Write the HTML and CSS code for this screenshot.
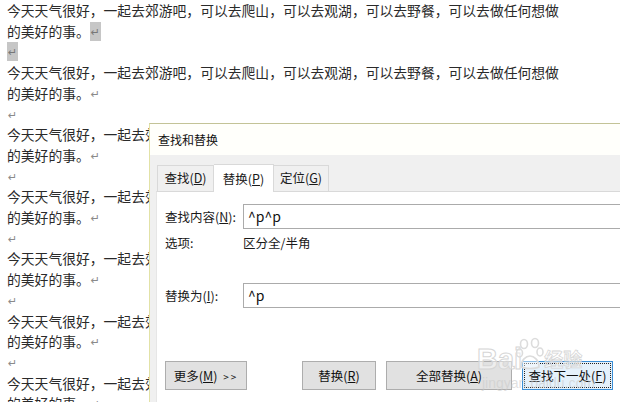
FILE: index.html
```html
<!DOCTYPE html>
<html lang="zh-CN">
<head>
<meta charset="utf-8">
<link rel="stylesheet" href="styles.css">
</head>
<body>
<div class="doc">
  <p class="para">今天天气很好，一起去郊游吧，可以去爬山，可以去观湖，可以去野餐，可以去做任何想做<br>的美好的事。<span class="mark sel">↵</span></p>
  <p class="para"><span class="mark sel">↵</span></p>
  <p class="para">今天天气很好，一起去郊游吧，可以去爬山，可以去观湖，可以去野餐，可以去做任何想做<br>的美好的事。<span class="mark">↵</span></p>
  <p class="para"><span class="mark">↵</span></p>
  <p class="para">今天天气很好，一起去郊游吧，可以去爬山，可以去观湖，可以去野餐，可以去做任何想做<br>的美好的事。<span class="mark">↵</span></p>
  <p class="para"><span class="mark">↵</span></p>
  <p class="para">今天天气很好，一起去郊游吧，可以去爬山，可以去观湖，可以去野餐，可以去做任何想做<br>的美好的事。<span class="mark">↵</span></p>
  <p class="para"><span class="mark">↵</span></p>
  <p class="para">今天天气很好，一起去郊游吧，可以去爬山，可以去观湖，可以去野餐，可以去做任何想做<br>的美好的事。<span class="mark">↵</span></p>
  <p class="para"><span class="mark">↵</span></p>
  <p class="para">今天天气很好，一起去郊游吧，可以去爬山，可以去观湖，可以去野餐，可以去做任何想做<br>的美好的事。<span class="mark">↵</span></p>
  <p class="para"><span class="mark">↵</span></p>
  <p class="para">今天天气很好，一起去郊游吧，可以去爬山，可以去观湖，可以去野餐，可以去做任何想做<br>的美好的事。<span class="mark">↵</span></p>
</div>

<div class="dialog">
  <div class="titlebar">查找和替换</div>
  <div class="body">
    <div class="tabs">
      <div class="tab">查找(<u>D</u>)</div>
      <div class="tab active">替换(<u>P</u>)</div>
      <div class="tab">定位(<u>G</u>)</div>
    </div>
    <div class="panel">
      <div class="row row-find">
        <span class="label">查找内容(<u>N</u>):</span>
        <div class="input">^p^p</div>
      </div>
      <div class="row row-opt">
        <span class="label">选项:</span>
        <span class="value">区分全/半角</span>
      </div>
      <div class="row row-repl">
        <span class="label">替换为(<u>I</u>):</span>
        <div class="input">^p</div>
      </div>
      <div class="buttons">
        <button class="btn btn-more">更多(<u>M</u>) <span class="arrows">&gt;&gt;</span></button>
        <button class="btn btn-repl">替换(<u>R</u>)</button>
        <button class="btn btn-all">全部替换(<u>A</u>)</button>
        <button class="btn btn-next">查找下一处(<u>F</u>)</button>
      </div>
    </div>
  </div>
  <div class="watermark">
    <div class="wm-line"><span class="wm-bai">Bai</span><svg class="wm-paw" width="28" height="34" viewBox="0 0 28 34"><g fill="rgba(255,255,255,0.4)" stroke="#dcdcdc" stroke-width="1.6"><ellipse cx="8" cy="7" rx="3.5" ry="4.5"/><ellipse cx="19" cy="6" rx="3.5" ry="4.5"/><ellipse cx="3.5" cy="16" rx="3" ry="4"/><ellipse cx="24" cy="15" rx="3" ry="4"/><path d="M5 30 C5 23 10 19 14 19 C18 19 23 23 23 30 C19 32 9 32 5 30 Z"/></g></svg><span class="wm-jy">经验</span></div>
    <div class="wm-url">jingyan.baidu.com</div>
  </div>
</div>
</body>
</html>
```
FILE: styles.css
```css
html, body {
  margin: 0;
  padding: 0;
  width: 620px;
  height: 402px;
  overflow: hidden;
  background: #ffffff;
}

body {
  position: relative;
  font-family: "Noto Sans CJK SC", "Noto Sans", sans-serif;
}

.doc {
  padding: 0 0 0 7px;
  font-size: 13.8px;
  line-height: 20.7px;
  color: #2a2a2a;
}

.para {
  margin: 0;
  white-space: nowrap;
}

.mark {
  display: inline-block;
  width: 11px;
  height: 19px;
  vertical-align: top;
  margin-top: 1px;
  font-family: "DejaVu Sans", sans-serif;
  font-size: 11px;
  line-height: 22px;
  color: #8a8a8a;
  text-align: center;
}

.mark.sel {
  background: #c6c6c6;
  color: #777;
}

/* dialog */
.dialog {
  position: absolute;
  left: 149px;
  top: 123px;
  width: 480px;
  height: 290px;
  border-top: 1px solid #c3c397;
  border-left: 1px solid #e2e2a6;
  background: #f0f0f0;
  font-size: 12.5px;
  color: #1a1a1a;
}

.titlebar {
  height: 31px;
  line-height: 31px;
  padding-left: 8px;
  background: #fffffb;
  font-size: 12px;
  color: #111;
}

.body {
  background: #f0f0f0;
  padding-left: 6px;
}

.tabs {
  display: flex;
  align-items: flex-end;
  height: 36px;
  padding-left: 1px;
}

.tab {
  height: 25px;
  line-height: 24px;
  padding: 0;
  text-align: center;
  border: 1px solid #d9d9d9;
  border-bottom: none;
  background: #f0f0f0;
  color: #1a1a1a;
}

.tab:nth-child(1) { width: 55px; }
.tab:nth-child(3) { width: 54px; border-left: none; }

.tab.active {
  width: 59px;
  height: 27px;
  line-height: 28px;
  background: #ffffff;
  border-color: #d9d9d9;
  position: relative;
  top: 1px;
  z-index: 1;
  border-left: none;
}

.panel {
  background: #ffffff;
  border-top: 1px solid #d9d9d9;
  border-left: 1px solid #e6e6e6;
  height: 230px;
  padding: 12px 0 0 8px;
}

.row {
  display: flex;
  align-items: center;
}

.label {
  width: 78px;
  flex: none;
}

.input {
  height: 23px;
  line-height: 22px;
  width: 400px;
  border: 1px solid #ababab;
  padding-left: 4px;
  font-size: 14px;
  color: #111;
  box-sizing: content-box;
}

.row-opt {
  height: 18px;
  line-height: 18px;
  margin-top: 5px;
}

.row-repl {
  margin-top: 31px;
}

.buttons {
  display: flex;
  margin-top: 53px;
}

.btn {
  height: 29px;
  box-sizing: border-box;
  border: 1px solid #adadad;
  background: #e1e1e1;
  font-family: "Noto Sans CJK SC", "Noto Sans", sans-serif;
  font-size: 12.5px;
  color: #111;
  padding: 0;
  margin: 0;
  text-align: center;
}

.btn-more { width: 82px; }
.btn-repl { width: 74px; margin-left: 55px; }
.btn-all { width: 126px; margin-left: 10px; }
.btn-next {
  width: 91px;
  margin-left: 10px;
  background: #e5f1fb;
  border-color: #3c8fd6;
  outline: 1px dotted #222;
  outline-offset: -3px;
}

.arrows {
  letter-spacing: 2px;
  font-size: 10px;
  margin-left: 3px;
}

u {
  text-decoration: underline;
  text-underline-offset: 1px;
}

/* faint Baidu watermark lying over the dialog */
.watermark {
  position: absolute;
  left: 327px;
  top: 210px;
  z-index: 5;
  pointer-events: none;
}

.wm-line {
  display: flex;
  align-items: flex-end;
  height: 40px;
}

.wm-bai {
  font-family: "Liberation Sans", sans-serif;
  font-size: 29px;
  line-height: 30px;
  font-weight: bold;
  color: rgba(255, 255, 255, 0.45);
  -webkit-text-stroke: 1px #d6d6d6;
}

.wm-paw {
  margin: 0 0 3px -6px;
}

.wm-jy {
  font-size: 19px;
  line-height: 24px;
  font-weight: bold;
  color: rgba(255, 255, 255, 0.45);
  -webkit-text-stroke: 0.8px #d6d6d6;
  margin-bottom: 3px;
}

.wm-url {
  font-family: "Liberation Sans", sans-serif;
  font-size: 14px;
  line-height: 16px;
  color: rgba(200, 200, 200, 0.55);
  margin-top: 1px;
  margin-left: 5px;
}
```
